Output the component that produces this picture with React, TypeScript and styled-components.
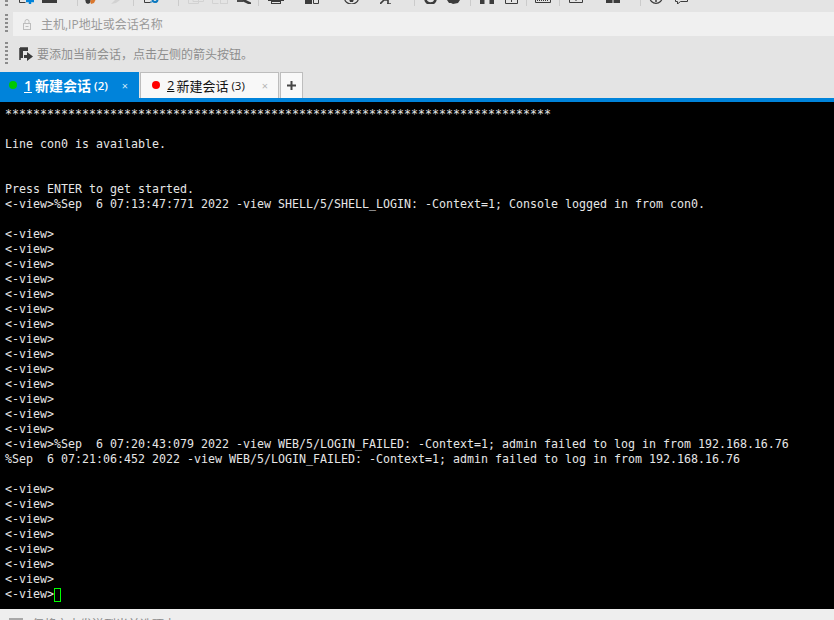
import React from 'react';
import styled, { createGlobalStyle } from 'styled-components';

const GlobalStyle = createGlobalStyle`
  html, body {
    margin: 0;
    padding: 0;
    background: #e4e4e4;
  }
`;

const uiFont = `"Open Sans", "Noto Sans CJK SC", sans-serif`;

const Window = styled.div`
  width: 834px;
  height: 620px;
  display: flex;
  flex-direction: column;
  overflow: hidden;
  background: #e4e4e4;
  font-family: ${uiFont};
`;

const Toolbar = styled.div`
  height: 12px;
  flex: none;
  display: flex;
  align-items: flex-start;
  overflow: hidden;
`;

const Grip = styled.div<{ $h: number }>`
  width: 3px;
  height: ${(p) => p.$h}px;
  flex: none;
  margin-left: 5px;
  background-image: repeating-linear-gradient(to bottom, #8c8c8c 0 2px, transparent 2px 4px);
`;

// the window cuts the icons off at the top, so a slot shows only their last 4px
const ToolSlot = styled.div<{ $left: number; $w: number }>`
  flex: none;
  width: ${(p) => p.$w}px;
  height: 4px;
  margin-left: ${(p) => p.$left}px;
  overflow: hidden;
  display: flex;
  align-items: flex-end;
`;

const ToolSep = styled.div<{ $left: number }>`
  flex: none;
  width: 1px;
  height: 6px;
  margin-left: ${(p) => p.$left}px;
  background: #cbcbcb;
`;

const AddressRow = styled.div`
  height: 24px;
  flex: none;
  display: flex;
  align-items: center;
`;

const AddressBox = styled.div`
  flex: 1;
  height: 24px;
  margin-left: 5px;
  background: #f0f0f0;
  display: flex;
  align-items: center;
  padding-left: 10px;
  gap: 10px;
  font-size: 12px;
  color: #9a9a9a;
`;

const HintRow = styled.div`
  height: 36px;
  flex: none;
  display: flex;
  align-items: center;
  font-size: 12px;
  color: #8e8e8e;
`;

const HintIcon = styled.svg`
  margin-left: 11px;
  margin-right: 4px;
  flex: none;
`;

const TabBar = styled.div`
  height: 26px;
  flex: none;
  display: flex;
  align-items: stretch;
  gap: 1px;
`;

const Tab = styled.div<{ $active?: boolean }>`
  width: 139px;
  box-sizing: border-box;
  display: flex;
  align-items: center;
  padding-left: ${(p) => (p.$active ? 8 : 11)}px;
  padding-bottom: 1px;
  background: ${(p) => (p.$active ? '#0083da' : '#f8f8f8')};
  border: 1px solid ${(p) => (p.$active ? '#0083da' : '#bdbdbd')};
  border-bottom: none;
  color: ${(p) => (p.$active ? '#fff' : '#111')};
  font-weight: ${(p) => (p.$active ? 600 : 400)};
  font-size: ${(p) => (p.$active ? 14 : 13)}px;
`;

const Dot = styled.span<{ $color: string }>`
  width: 8px;
  height: 8px;
  border-radius: 50%;
  background: ${(p) => p.$color};
  flex: none;
  margin-right: 7px;
`;

const TabIndex = styled.span<{ $active?: boolean }>`
  text-decoration: underline;
  margin-right: ${(p) => (p.$active ? 3 : 2)}px;
`;

const TabCount = styled.span`
  margin-left: 3px;
  font-size: 11.5px;
`;

const TabClose = styled.span<{ $active?: boolean }>`
  margin-left: auto;
  margin-right: 10px;
  font-size: 11px;
  font-weight: 400;
  color: ${(p) => (p.$active ? '#cfe8f8' : '#b5b5b5')};
`;

const AddTab = styled.div`
  width: 23px;
  box-sizing: border-box;
  border: 1px solid #bdbdbd;
  border-bottom: none;
  background: #f8f8f8;
  display: flex;
  align-items: center;
  justify-content: center;
`;

const BlueRule = styled.div`
  height: 4px;
  flex: none;
  background: #0083da;
`;

const Terminal = styled.pre`
  height: 507px;
  flex: none;
  box-sizing: border-box;
  margin: 0;
  padding: 5px 0 0 5px;
  background: #000;
  color: #e6e6e6;
  font-family: "DejaVu Sans Mono", "Liberation Mono", monospace;
  font-size: 11.63px;
  line-height: 15px;
  overflow: hidden;
`;

const Cursor = styled.span`
  display: inline-block;
  width: 7px;
  height: 14px;
  box-sizing: border-box;
  border: 1px solid #00ff00;
  vertical-align: -4px;
`;

const StatusBar = styled.div`
  height: 11px;
  flex: none;
  display: flex;
  align-items: flex-start;
  overflow: hidden;
  background: #eeeeee;
  padding: 9px 0 0 9px;
  box-sizing: border-box;
  gap: 9px;
  font-size: 12px;
  line-height: 14px;
  color: #8a8a8a;
`;

const StatusIcon = styled.div`
  width: 14px;
  height: 6px;
  flex: none;
  background: #a8a8a8;
`;

const S = ({ w, children }: { w: number; children: React.ReactNode }) => (
  <svg width={w} height={w} viewBox={`0 0 ${w} ${w}`} fill="none" style={{ flex: 'none' }}>
    {children}
  </svg>
);

const dark = '#3c3c3c';
const faint = '#d2d2d2';

const tools: { kind: 'icon' | 'sep'; left: number; w?: number; icon?: React.ReactNode }[] = [
  {
    kind: 'icon', left: 10, w: 16,
    icon: (
      <S w={16}>
        <path d="M1.5 4v10.5h6" stroke={dark} />
        <path d="M12 8v8M8 13h8" stroke="#0083da" strokeWidth="2.4" />
      </S>
    ),
  },
  {
    kind: 'icon', left: 8, w: 15,
    icon: (
      <S w={15}>
        <rect x="0" y="4" width="15" height="10" fill={dark} />
      </S>
    ),
  },
  { kind: 'sep', left: 20 },
  {
    kind: 'icon', left: 7, w: 11,
    icon: (
      <S w={11}>
        <path d="M0 6h6l-1 4-2 1-2-1z" fill={dark} />
        <path d="M5 8l3-2h3l-2 4-3 1z" fill="#d9772e" />
      </S>
    ),
  },
  {
    kind: 'icon', left: 14, w: 11,
    icon: (
      <S w={11}>
        <path d="M1 11l4-4h5l-4 3z" fill={faint} />
      </S>
    ),
  },
  { kind: 'sep', left: 12 },
  {
    kind: 'icon', left: 10, w: 16,
    icon: (
      <S w={16}>
        <path d="M.5 8v6.500h6" stroke={dark} />
        <circle cx="11" cy="11.500" r="2.500" stroke="#0a78c0" strokeWidth="2" />
        <path d="M6 14h10" stroke="#0a78c0" strokeDasharray="2 3" />
      </S>
    ),
  },
  { kind: 'sep', left: 18 },
  {
    kind: 'icon', left: 9, w: 16,
    icon: (
      <S w={16}>
        <path d="M.5 10v5.500h10V10M5 8v5.500h10.500V8" stroke={faint} />
      </S>
    ),
  },
  {
    kind: 'icon', left: 8, w: 16,
    icon: (
      <S w={16}>
        <path d="M.5 10v5.500h6" stroke={faint} />
        <rect x="8.500" y="9" width="7" height="6.500" stroke={faint} />
      </S>
    ),
  },
  {
    kind: 'icon', left: 9, w: 14,
    icon: (
      <S w={14}>
        <path d="M6 10l8 4" stroke={dark} strokeWidth="2.600" />
        <path d="M0 11h6" stroke={dark} strokeWidth="1.800" />
      </S>
    ),
  },
  { kind: 'sep', left: 7 },
  {
    kind: 'icon', left: 9, w: 16,
    icon: (
      <S w={16}>
        <path d="M0 12h16v1H0z" fill={dark} />
        <rect x="3.500" y="13.500" width="9" height="2" stroke={dark} />
      </S>
    ),
  },
  {
    kind: 'icon', left: 21, w: 14,
    icon: (
      <S w={14}>
        <rect x="0" y="8" width="7" height="6" fill={dark} />
        <path d="M8.500 8v5.500h5V8" stroke={dark} />
      </S>
    ),
  },
  {
    kind: 'icon', left: 25, w: 15,
    icon: (
      <S w={15}>
        <path d="M.5 9a7 6 0 0 0 14 0" stroke={dark} strokeWidth="1.200" />
        <path d="M5 10h5l-1 3H6z" fill={dark} />
      </S>
    ),
  },
  {
    kind: 'icon', left: 21, w: 13,
    icon: (
      <S w={13}>
        <path d="M0 13l4-4h4M8 9v4M7 13h4" stroke={dark} strokeWidth="1.600" />
      </S>
    ),
  },
  { kind: 'sep', left: 21 },
  {
    kind: 'icon', left: 9, w: 13,
    icon: (
      <S w={13}>
        <path d="M1.500 8a5 4.500 0 0 0 10 0" stroke={dark} strokeWidth="2.600" />
      </S>
    ),
  },
  {
    kind: 'icon', left: 10, w: 13,
    icon: (
      <S w={13}>
        <path d="M0 9h13l-2 3-5 1-2-1H2z" fill={dark} />
      </S>
    ),
  },
  { kind: 'sep', left: 10 },
  {
    kind: 'icon', left: 9, w: 14,
    icon: (
      <S w={14}>
        <path d="M0 9h4.500v5H0zM9.500 9H14v5H9.500z" fill={dark} />
      </S>
    ),
  },
  {
    kind: 'icon', left: 11, w: 13,
    icon: (
      <S w={13}>
        <path d="M.5 9v3.500h12V9" stroke={dark} />
        <path d="M6.500 9v2" stroke={dark} />
      </S>
    ),
  },
  { kind: 'sep', left: 8 },
  {
    kind: 'icon', left: 8, w: 16,
    icon: (
      <S w={16}>
        <path d="M.5 11v3.500h15V11" stroke={dark} />
        <path d="M2 12.500h12" stroke={dark} strokeDasharray="1 1" />
      </S>
    ),
  },
  { kind: 'sep', left: 8 },
  {
    kind: 'icon', left: 9, w: 14,
    icon: (
      <S w={14}>
        <path d="M.5 9v3.500h13V9" stroke={dark} />
        <path d="M7 9v2" stroke={dark} />
      </S>
    ),
  },
  {
    kind: 'icon', left: 23, w: 14,
    icon: (
      <S w={14}>
        <path d="M0 10h6.500v3H0zM7.500 10H14v3H7.500z" fill={dark} />
      </S>
    ),
  },
  { kind: 'sep', left: 20 },
  {
    kind: 'icon', left: 8, w: 14,
    icon: (
      <S w={14}>
        <circle cx="7" cy="7" r="6.300" stroke={dark} strokeWidth="1.200" />
        <path d="M7 9v3" stroke={dark} strokeWidth="1.500" />
      </S>
    ),
  },
  {
    kind: 'icon', left: 12, w: 13,
    icon: (
      <S w={13}>
        <path d="M.5 9v1.500h2V13l3-2.500h7V9" stroke={dark} />
      </S>
    ),
  },
];

const Lock = () => (
  <svg width="8" height="11" viewBox="0 0 8 11" fill="none" style={{ flex: 'none' }}>
    <path d="M2 4.500V2.500a2 2 0 0 1 4 0v2" stroke="#bdbdbd" />
    <rect x=".5" y="4.500" width="7" height="6" stroke="#bdbdbd" />
    <path d="M2.500 7.500h3" stroke="#bdbdbd" />
  </svg>
);

const stars = '*'.repeat(78);
const view = '<-view>';
const rep = (n: number) => Array(n).fill(view).join('\n');

const lines = [
  stars,
  '',
  'Line con0 is available.',
  '',
  '',
  'Press ENTER to get started.',
  '<-view>%Sep  6 07:13:47:771 2022 -view SHELL/5/SHELL_LOGIN: -Context=1; Console logged in from con0.',
  '',
  rep(14),
  '<-view>%Sep  6 07:20:43:079 2022 -view WEB/5/LOGIN_FAILED: -Context=1; admin failed to log in from 192.168.16.76',
  '%Sep  6 07:21:06:452 2022 -view WEB/5/LOGIN_FAILED: -Context=1; admin failed to log in from 192.168.16.76',
  '',
  rep(7),
  view,
].join('\n');

export default function App() {
  return (
    <Window>
      <GlobalStyle />
      <Toolbar>
        <Grip $h={6} />
        {tools.map((t, i) =>
          t.kind === 'sep' ? (
            <ToolSep key={i} $left={t.left} />
          ) : (
            <ToolSlot key={i} $left={t.left} $w={t.w ?? 14}>
              {t.icon}
            </ToolSlot>
          ),
        )}
      </Toolbar>
      <AddressRow>
        <Grip $h={20} />
        <AddressBox>
          <Lock />
          主机,IP地址或会话名称
        </AddressBox>
      </AddressRow>
      <HintRow>
        <Grip $h={24} />
        <HintIcon width="14" height="15" viewBox="0 0 14 15">
          <path d="M1 1h8v3H4v7H1z" fill="#3a3a3a" />
          <path d="M1 1h8M1 1v12" stroke="#3a3a3a" strokeWidth="1.500" fill="none" />
          <path d="M5 8h3V5l6 4.500-6 4.500v-3H5z" fill="#3a3a3a" />
        </HintIcon>
        要添加当前会话，点击左侧的箭头按钮。
      </HintRow>
      <TabBar>
        <Tab $active>
          <Dot $color="#00c800" />
          <TabIndex $active>1</TabIndex>新建会话<TabCount>(2)</TabCount>
          <TabClose $active>×</TabClose>
        </Tab>
        <Tab>
          <Dot $color="#ff0000" />
          <TabIndex>2</TabIndex>新建会话<TabCount>(3)</TabCount>
          <TabClose>×</TabClose>
        </Tab>
        <AddTab>
          <svg width="9" height="9" viewBox="0 0 9 9">
            <path d="M4.500 0v9M0 4.500h9" stroke="#444" strokeWidth="2" />
          </svg>
        </AddTab>
      </TabBar>
      <BlueRule />
      <Terminal>
        {lines}
        <Cursor />
      </Terminal>
      <StatusBar>
        <StatusIcon />
        <span>仅将文本发送到当前选项卡</span>
      </StatusBar>
    </Window>
  );
}
